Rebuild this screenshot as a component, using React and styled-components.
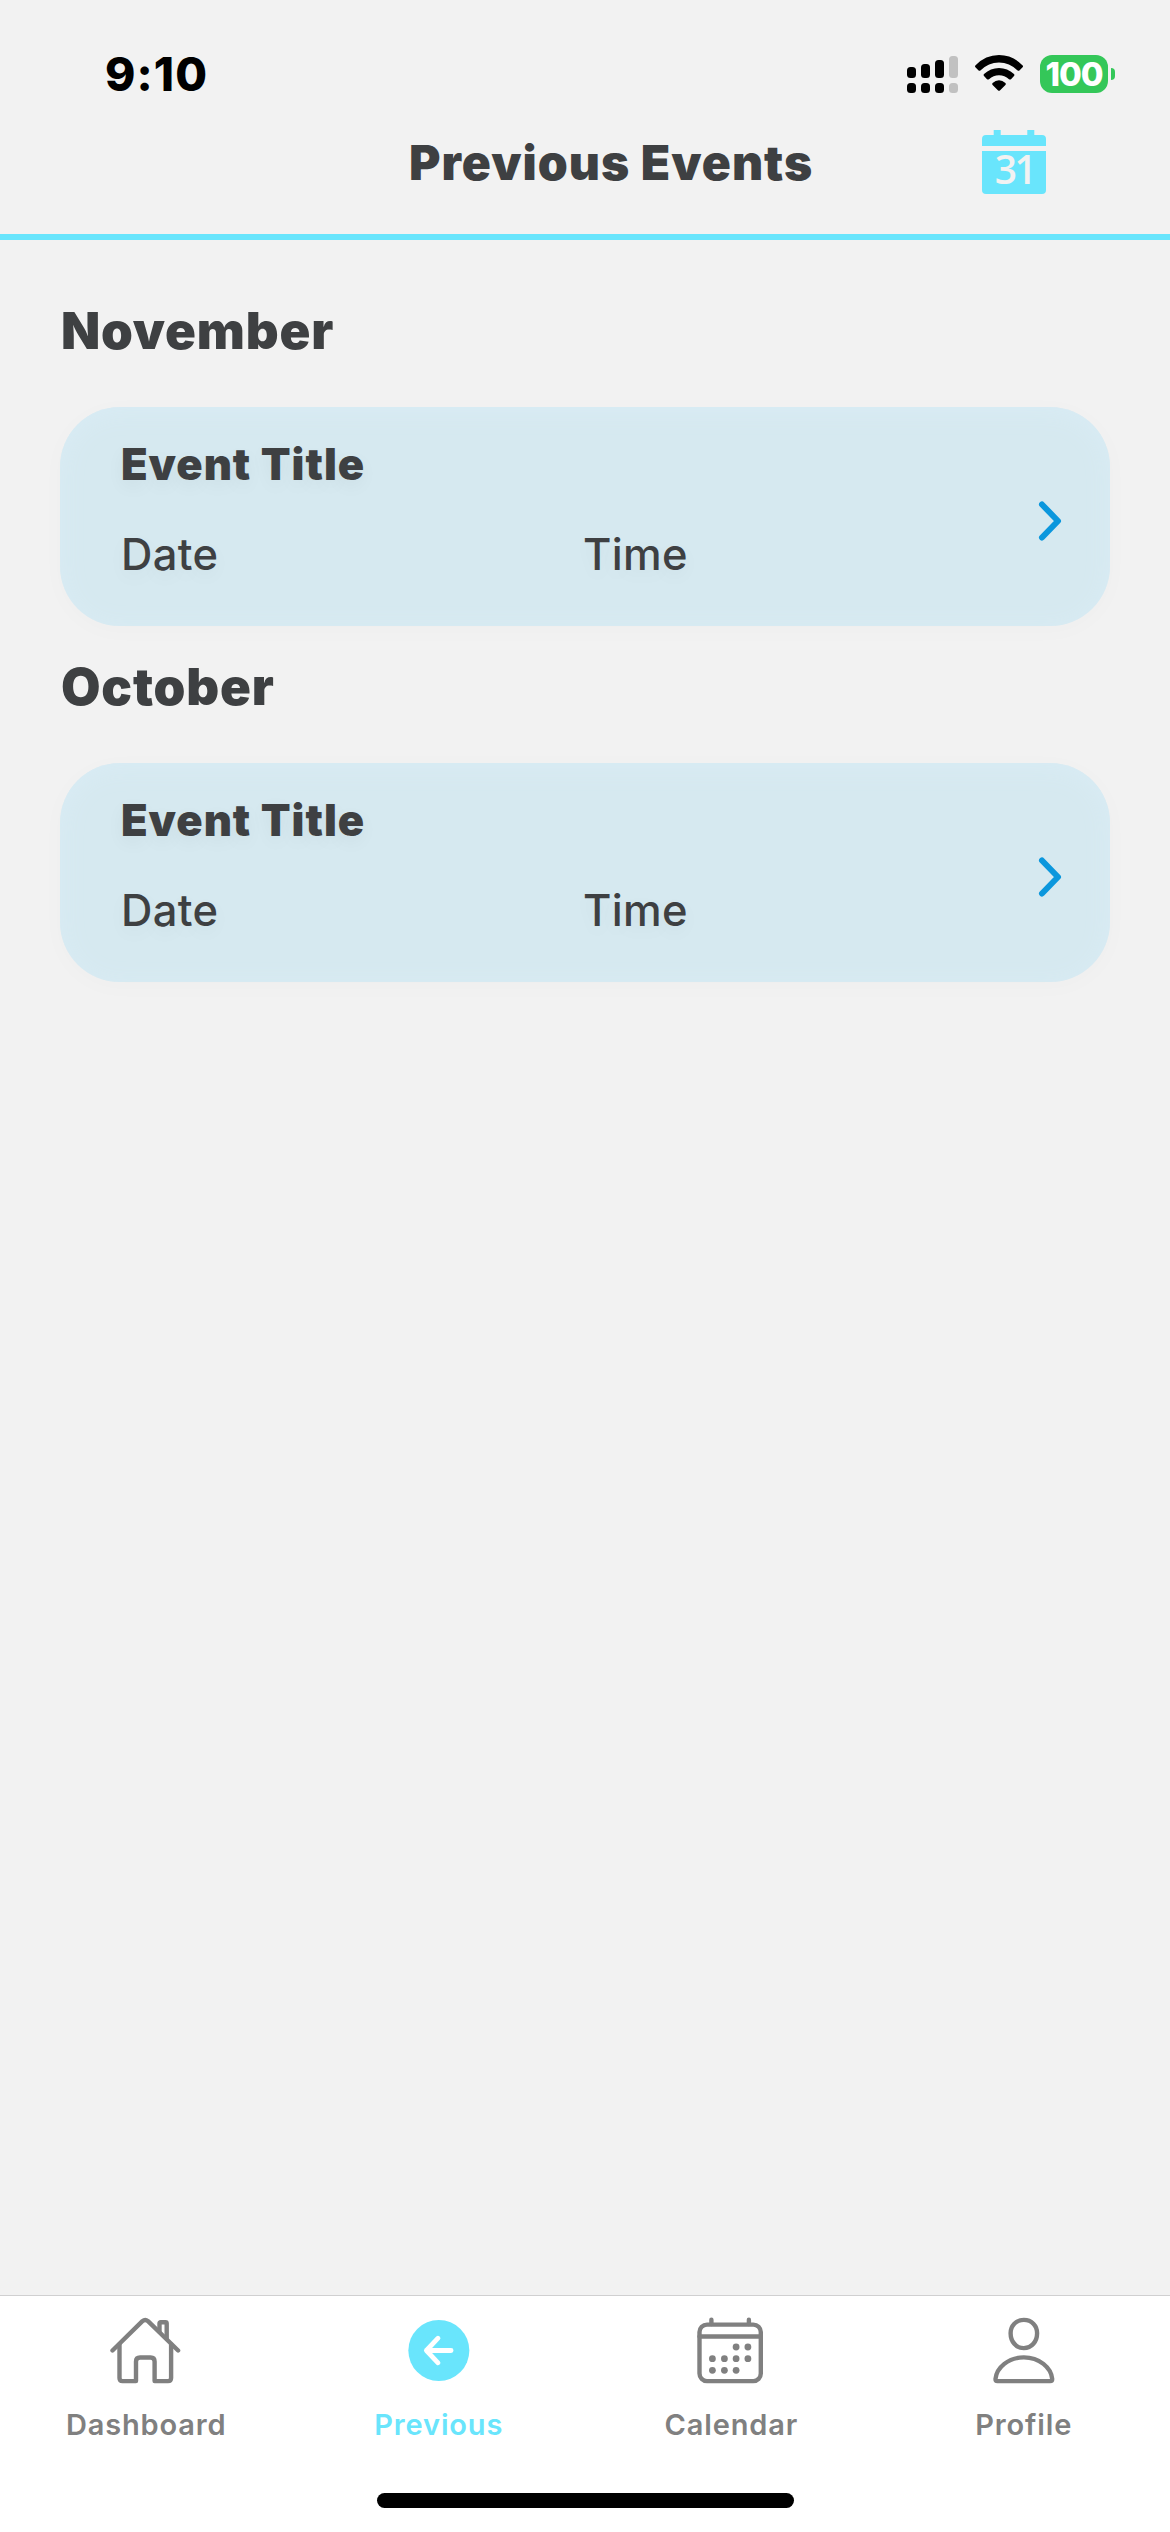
import React from "react";
import styled, { createGlobalStyle } from "styled-components";

const GlobalStyle = createGlobalStyle`
  * { box-sizing: border-box; }
  body { margin: 0; background: #f2f2f2; }
`;

const Screen = styled.div`
  width: 1170px;
  height: 2532px;
  display: flex;
  flex-direction: column;
  overflow: hidden;
  background: #f2f2f2;
  color: #3e4042;
  font-family: Inter, "Liberation Sans", sans-serif;
`;

const StatusBar = styled.div`
  height: 110px;
  padding: 55px 55px 17px 105px;
  display: flex;
  align-items: center;
  justify-content: space-between;
  color: #000;
`;

const Clock = styled.div`
  font-size: 46px;
  line-height: 38px;
  font-weight: 800;
  letter-spacing: 1.1px;
`;

const StatusIcons = styled.div`
  display: flex;
  height: 38px;
`;

const SignalIcon = styled.svg`
  width: 51px;
  height: 38px;
  margin-right: 17px;
`;

const WifiIcon = styled.svg`
  width: 49px;
  height: 38px;
  margin-right: 16px;
`;

const Battery = styled.div`
  width: 68px;
  height: 38px;
  border-radius: 12px;
  background: #34c759;
  color: #fff;
  font-size: 33px;
  font-weight: 800;
  line-height: 38px;
  letter-spacing: -1px;
  text-align: center;
`;

const BatteryCap = styled.div`
  width: 4px;
  height: 12px;
  margin: 13px 0 0 3px;
  border-radius: 0 5px 5px 0;
  background: #34c759;
`;

const Header = styled.header`
  height: 130px;
  padding: 20px 124px 0 409px;
  display: flex;
  align-items: flex-start;
  justify-content: space-between;
  border-bottom: 6px solid #69e5fc;
`;

const PageTitle = styled.h1`
  margin: 0;
  font-size: 48px;
  line-height: 65px;
  font-weight: 900;
  letter-spacing: 1.02px;
  white-space: nowrap;
`;

const DayIcon = styled.svg`
  width: 64px;
  height: 64px;
  fill: #69e5fc;
`;

const Content = styled.main`
  flex: 1;
  padding: 61px 60px 0;
  display: flex;
  flex-direction: column;
  gap: 31px;
`;

const Month = styled.section`
  display: flex;
  flex-direction: column;
  gap: 46px;
`;

const MonthTitle = styled.h2`
  margin: 0;
  padding-left: 1px;
  font-size: 51px;
  line-height: 60px;
  font-weight: 900;
  letter-spacing: 0.8px;
`;

const Card = styled.article`
  height: 219px;
  padding: 30px 48px 0 61px;
  display: flex;
  justify-content: space-between;
  border-radius: 60px;
  background: #d6e9f0;
  box-shadow: 0 4px 26px rgba(0, 0, 0, 0.02), inset 0 4px 26px #d9ecf5;
`;

const CardBody = styled.div`
  display: flex;
  flex-direction: column;
  gap: 36px;
  line-height: 54px;
  font-size: 43.5px;
  text-shadow: 0 6px 18px rgba(0, 0, 0, 0.05);
`;

const EventTitle = styled.h3`
  margin: 0;
  font-size: inherit;
  font-weight: 900;
  letter-spacing: 0.95px;
`;

const Details = styled.div`
  display: grid;
  grid-template-columns: 462px 300px;
  font-weight: 500;
  letter-spacing: 0.3px;
`;

const Chevron = styled.svg`
  width: 24px;
  height: 42px;
  margin-top: 63px;
  fill: none;
  stroke: #0b97dd;
  stroke-width: 6;
  stroke-linecap: round;
  stroke-linejoin: round;
`;

const Footer = styled.footer`
  height: 237px;
  border-top: 1px solid #d0d0d1;
  background: #fff;
  display: flex;
  flex-direction: column;
  align-items: center;
`;

const Tabs = styled.nav`
  width: 100%;
  padding-top: 21px;
  display: grid;
  grid-template-columns: repeat(4, 1fr);
`;

const Tab = styled.div`
  display: flex;
  flex-direction: column;
  align-items: center;
  gap: 23px;
  color: ${(p) => (p.$active ? "#69e5fc" : "#808080")};
  font-size: 29px;
  line-height: 36px;
  font-weight: 570;
  letter-spacing: 0.85px;
`;

const TabIcon = styled.svg`
  width: 72px;
  height: 67px;
  fill: none;
  stroke: currentColor;
  stroke-width: 4.4;
  stroke-linecap: round;
  stroke-linejoin: round;
`;

const HomeIndicator = styled.div`
  width: 417px;
  height: 15px;
  margin-top: 50px;
  border-radius: 8px;
  background: #000;
`;

const HomeIcon = () => (
  <TabIcon viewBox="0 0 72 67">
    <path d="M2.5 33.5 L32.4 4.1 Q35.2 1.8 38 4.1 L68.1 33.5" />
    <path d="M9.5 27.5 V61 Q9.5 64.1 12.6 64.1 H26 V44.5 Q26 40.5 30 40.5 H40.6 Q44.6 40.5 44.6 44.5 V64.1 H58 Q61.1 64.1 61.1 61 V27.5" />
    <path d="M49.5 14.5 V6.4 Q49.5 5.2 50.7 5.2 H55.5 Q56.7 5.2 56.7 6.4 V21.5" />
  </TabIcon>
);

const PreviousIcon = () => (
  <TabIcon viewBox="0 0 72 67">
    <circle cx="35.85" cy="33.5" r="30.5" fill="currentColor" stroke="none" />
    <path d="M48.1 33.5 H23.4 M35 21.2 L23.4 33.5 L35 45.8" stroke="#fff" strokeWidth="4.8" />
  </TabIcon>
);

const DOTS = [
  [41.1, 30], [52.9, 30],
  [17.4, 41.7], [29.4, 41.7], [41.1, 41.7], [52.9, 41.7],
  [17.4, 53.3], [29.4, 53.3], [41.1, 53.3],
];

const CalendarIcon = () => (
  <TabIcon viewBox="0 0 72 67">
    <rect x="4.5" y="7.6" width="61.3" height="56.5" rx="7.5" />
    <path d="M4.5 19.5 H65.8 M16.4 2.8 V7 M53.9 2.8 V7" />
    {DOTS.map(([x, y]) => (
      <circle key={`${x}-${y}`} cx={x} cy={y} r="3.4" fill="currentColor" stroke="none" />
    ))}
  </TabIcon>
);

const ProfileIcon = () => (
  <TabIcon viewBox="0 0 72 67">
    <path d="M35.85 2.9 C43.6 2.9 49.1 8.6 49.1 16.2 C49.1 24.6 43.6 31.1 35.85 31.1 C28.1 31.1 22.6 24.6 22.6 16.2 C22.6 8.6 28.1 2.9 35.85 2.9 Z" />
    <path d="M9.4 64.1 Q7.5 64.1 7.5 61.9 C8.6 50.5 20.4 40.4 35.85 40.4 C51.3 40.4 63.1 50.5 64.2 61.9 Q64.2 64.1 62.3 64.1 Z" />
  </TabIcon>
);

const TABS = [
  { label: "Dashboard", Icon: HomeIcon },
  { label: "Previous", Icon: PreviousIcon, active: true },
  { label: "Calendar", Icon: CalendarIcon },
  { label: "Profile", Icon: ProfileIcon },
];

const BARS = [
  { x: 0, y: 12 },
  { x: 14, y: 9 },
  { x: 28, y: 5 },
  { x: 42, y: 1 },
];

export default function App() {
  return (
    <>
      <GlobalStyle />
      <Screen>
        <StatusBar>
          <Clock>9:10</Clock>
          <StatusIcons>
            <SignalIcon viewBox="0 0 51 38">
              {BARS.map(({ x, y }, i) => (
                <g key={x} fill={i === 3 ? "#c1c1c1" : "#000"}>
                  <rect x={x} y={y} width="9" height={23 - y} rx="3.5" />
                  <rect x={x} y="28" width="9" height="10" rx="3.5" />
                </g>
              ))}
            </SignalIcon>
            <WifiIcon viewBox="0 0 49 38">
              <path d="M0.6 10.2 Q10.5 0 24 0 Q37.5 0 47.4 10.2 Q48.6 11.2 47.6 12.2 L44.4 15.4 Q43.5 16.3 42.6 15.4 Q34.5 7.4 24 7.4 Q13.5 7.4 5.4 15.4 Q4.5 16.3 3.6 15.4 L0.4 12.2 Q-0.6 11.2 0.6 10.2 Z" />
              <path d="M9 19 Q15.5 13 24 13 Q32.5 13 39 19 Q40 20 39 21 L36 24.2 Q35 25 34 24.2 Q29.7 20.2 24 20.2 Q18.3 20.2 14 24.2 Q13 25 12 24.2 L9 21 Q8 20 9 19 Z" />
              <path d="M17.6 28 Q20.5 25.3 24 25.3 Q27.5 25.3 30.4 28 Q31.4 29 30.4 30 L24.9 35.4 Q24 36.3 23.1 35.4 L17.6 30 Q16.6 29 17.6 28 Z" />
            </WifiIcon>
            <Battery>100</Battery>
            <BatteryCap />
          </StatusIcons>
        </StatusBar>
        <Header>
          <PageTitle>Previous Events</PageTitle>
          <DayIcon viewBox="0 0 64 64">
            <path d="M0 16 V9 Q0 5 4 5 H11.7 V0 H18.7 V5 H45.3 V0 H52.3 V5 H60 Q64 5 64 9 V16 Z" />
            <path d="M0 21 H64 V60 Q64 64 60 64 H4 Q0 64 0 60 Z" />
            <text x="12.8 32.6" y="54" fill="#f2f2f2" fontFamily="Open Sans, sans-serif" fontWeight="650" fontSize="39">
              31
            </text>
          </DayIcon>
        </Header>
        <Content>
          {["November", "October"].map((month) => (
            <Month key={month}>
              <MonthTitle>{month}</MonthTitle>
              <Card>
                <CardBody>
                  <EventTitle>Event Title</EventTitle>
                  <Details>
                    <span>Date</span>
                    <span>Time</span>
                  </Details>
                </CardBody>
                <Chevron viewBox="0 0 24 42">
                  <path d="M4 4.5 L20 21 L4 37.5" />
                </Chevron>
              </Card>
            </Month>
          ))}
        </Content>
        <Footer>
          <Tabs>
            {TABS.map(({ label, Icon, active }) => (
              <Tab key={label} $active={active}>
                <Icon />
                {label}
              </Tab>
            ))}
          </Tabs>
          <HomeIndicator />
        </Footer>
      </Screen>
    </>
  );
}
